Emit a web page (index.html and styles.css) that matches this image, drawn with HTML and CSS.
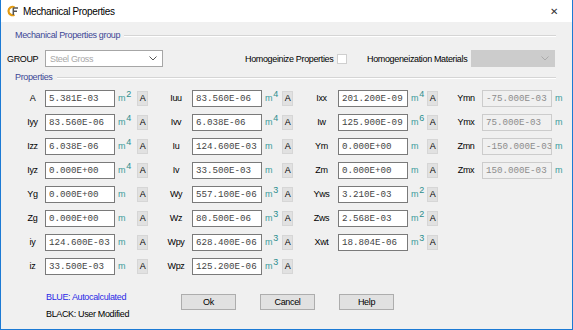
FILE: index.html
```html
<!DOCTYPE html>
<html lang="en">
<head>
    <meta charset="UTF-8">
    <title>Mechanical Properties</title>
    <link rel="stylesheet" href="styles.css">
</head>
<body>
    <div class="window">
        <div class="titlebar">
            <svg class="app-icon" width="12" height="12" viewBox="0 0 12 12">
                <path d="M7.5 2.2 A4.2 4.2 0 1 0 7.5 9.8" fill="none" stroke="#e39b12" stroke-width="2.2"/>
                <path d="M6.3 3 H11 M6.3 3 V10 M6.3 6.3 H10" fill="none" stroke="#555" stroke-width="1.5"/>
            </svg>
            <span class="title">Mechanical Properties</span>
            <span class="close">&#x2715;</span>
        </div>

        <div class="content">
            <div class="group-title"><span>Mechanical Properties group</span><i class="rule"></i></div>

            <div class="group-row">
                <span class="group-label">GROUP</span>
                <div class="combo">
                    <span>Steel Gross</span>
                    <svg width="8" height="5" viewBox="0 0 8 5"><path d="M0.5 0.5 L4 4 L7.5 0.5" fill="none" stroke="#555" stroke-width="1"/></svg>
                </div>
                <span class="homog">Homogeinize Properties</span>
                <span class="checkbox"></span>
                <span class="homog-mat">Homogeneization Materials</span>
                <div class="combo combo-off">
                    <svg width="8" height="5" viewBox="0 0 8 5"><path d="M0.5 0.5 L4 4 L7.5 0.5" fill="none" stroke="#aaa" stroke-width="1"/></svg>
                </div>
            </div>

            <div class="group-title props-title"><span>Properties</span><i class="rule"></i></div>

            <div class="props">
                <!-- row 1 -->
                <span class="lbl first">A</span><input class="val" value="5.381E-03"><span class="unit">m<sup>2</sup></span><span class="abtn">A</span>
                <span class="lbl">Iuu</span><input class="val" value="83.560E-06"><span class="unit">m<sup>4</sup></span><span class="abtn">A</span>
                <span class="lbl">Ixx</span><input class="val" value="201.200E-09"><span class="unit">m<sup>4</sup></span><span class="abtn">A</span>
                <span class="lbl">Ymn</span><input class="val off" value="-75.000E-03" disabled><span class="unit">m</span>
                <!-- row 2 -->
                <span class="lbl first">Iyy</span><input class="val" value="83.560E-06"><span class="unit">m<sup>4</sup></span><span class="abtn">A</span>
                <span class="lbl">Ivv</span><input class="val" value="6.038E-06"><span class="unit">m<sup>4</sup></span><span class="abtn">A</span>
                <span class="lbl">Iw</span><input class="val" value="125.900E-09"><span class="unit">m<sup>6</sup></span><span class="abtn">A</span>
                <span class="lbl">Ymx</span><input class="val off" value="75.000E-03" disabled><span class="unit">m</span>
                <!-- row 3 -->
                <span class="lbl first">Izz</span><input class="val" value="6.038E-06"><span class="unit">m<sup>4</sup></span><span class="abtn">A</span>
                <span class="lbl">Iu</span><input class="val" value="124.600E-03"><span class="unit">m</span><span class="abtn">A</span>
                <span class="lbl">Ym</span><input class="val" value="0.000E+00"><span class="unit">m</span><span class="abtn">A</span>
                <span class="lbl">Zmn</span><input class="val off" value="-150.000E-03" disabled><span class="unit">m</span>
                <!-- row 4 -->
                <span class="lbl first">Iyz</span><input class="val" value="0.000E+00"><span class="unit">m<sup>4</sup></span><span class="abtn">A</span>
                <span class="lbl">Iv</span><input class="val" value="33.500E-03"><span class="unit">m</span><span class="abtn">A</span>
                <span class="lbl">Zm</span><input class="val" value="0.000E+00"><span class="unit">m</span><span class="abtn">A</span>
                <span class="lbl">Zmx</span><input class="val off" value="150.000E-03" disabled><span class="unit">m</span>
                <!-- row 5 -->
                <span class="lbl first">Yg</span><input class="val" value="0.000E+00"><span class="unit">m</span><span class="abtn">A</span>
                <span class="lbl">Wy</span><input class="val" value="557.100E-06"><span class="unit">m<sup>3</sup></span><span class="abtn">A</span>
                <span class="lbl">Yws</span><input class="val" value="3.210E-03"><span class="unit">m<sup>2</sup></span><span class="abtn">A</span>
                <!-- row 6 -->
                <span class="lbl first">Zg</span><input class="val" value="0.000E+00"><span class="unit">m</span><span class="abtn">A</span>
                <span class="lbl">Wz</span><input class="val" value="80.500E-06"><span class="unit">m<sup>3</sup></span><span class="abtn">A</span>
                <span class="lbl">Zws</span><input class="val" value="2.568E-03"><span class="unit">m<sup>2</sup></span><span class="abtn">A</span>
                <!-- row 7 -->
                <span class="lbl first">iy</span><input class="val" value="124.600E-03"><span class="unit">m</span><span class="abtn">A</span>
                <span class="lbl">Wpy</span><input class="val" value="628.400E-06"><span class="unit">m<sup>3</sup></span><span class="abtn">A</span>
                <span class="lbl">Xwt</span><input class="val" value="18.804E-06"><span class="unit">m<sup>3</sup></span><span class="abtn">A</span>
                <!-- row 8 -->
                <span class="lbl first">iz</span><input class="val" value="33.500E-03"><span class="unit">m</span><span class="abtn">A</span>
                <span class="lbl">Wpz</span><input class="val" value="125.200E-06"><span class="unit">m<sup>3</sup></span><span class="abtn">A</span>
            </div>

            <div class="footer">
                <div class="legend">
                    <div class="blue">BLUE: Autocalculated</div>
                    <div>BLACK: User Modified</div>
                </div>
                <button class="btn">Ok</button>
                <button class="btn">Cancel</button>
                <button class="btn">Help</button>
            </div>
        </div>
    </div>
</body>
</html>
```

FILE: styles.css
```css
body {
    margin: 0;
    font-family: 'Liberation Sans', Arial, sans-serif;
    font-size: 9px;
    letter-spacing: -0.35px;
    color: #000;
    background: #fff;
}

.window {
    width: 573px;
    height: 330px;
    box-sizing: border-box;
    border: 1px solid #1c7ad4;
    border-top: none;
    background: #f0f0f0;
    overflow: hidden;
}

.titlebar {
    height: 22px;
    background: #fff;
    display: flex;
    align-items: center;
    padding-left: 6px;
}

.app-icon {
    margin-right: 4px;
}

.title {
    font-size: 10px;
    flex: 1;
}

.close {
    width: 20px;
    font-size: 10px;
    color: #333;
    margin-right: 2px;
}

.content {
    padding: 0 0 0 6px;
}

.group-title {
    display: flex;
    align-items: center;
    height: 12px;
    margin-top: 7px;
    padding-left: 8px;
    width: 541px;
    color: #3d4796;
}

.group-title .rule {
    flex: 1;
    height: 0;
    border-top: 1px solid #d5d5d5;
    border-bottom: 1px solid #fff;
    margin-left: 4px;
    margin-top: 1px;
}

.props-title {
    margin-top: 4px;
}

.group-row {
    display: flex;
    align-items: center;
    height: 17px;
    margin-top: 9px;
    white-space: nowrap;
}

.group-row > * {
    flex-shrink: 0;
}

.group-label {
    width: 38px;
}

.combo {
    width: 118px;
    height: 17px;
    box-sizing: border-box;
    border: 1px solid #a6a6a6;
    background: #fff;
    display: flex;
    align-items: center;
    justify-content: space-between;
    padding: 0 5px 0 4px;
    color: #a8a8a8;
}

.homog {
    width: 92px;
    margin-left: 82px;
}

.checkbox {
    width: 10px;
    height: 10px;
    box-sizing: border-box;
    border: 1px solid #cfcfcf;
    background: #fff;
}

.homog-mat {
    width: 104px;
    margin-left: 20px;
}

.combo-off {
    width: 84px;
    background: #cccccc;
    border-color: #cccccc;
    justify-content: flex-end;
}

.props {
    display: grid;
    grid-template-columns: 37px 70px 22px 11px 44px 70px 20px 11px 45px 70px 19px 11px 44px 70px 12px;
    grid-auto-rows: 24px;
    align-items: center;
    margin-top: 3px;
    margin-left: 1px;
}

.lbl {
    padding-left: 12px;
    text-align: center;
}

.lbl.first {
    grid-column: 1;
}

.val {
    width: 70px;
    height: 17px;
    box-sizing: border-box;
    border: 1px solid #7a7a7a;
    background: #fff;
    font-family: 'Liberation Mono', 'Courier New', monospace;
    font-size: 9.2px;
    letter-spacing: 0;
    color: #444;
    padding: 0 0 0 3px;
    margin: 0;
    outline: none;
}

.val.off {
    background: #f0f0f0;
    border-color: #cccccc;
    color: #8c8c8c;
}

.unit {
    padding-left: 3px;
    color: #3a9b9b;
    font-size: 9px;
}

.unit sup {
    font-size: 9px;
    vertical-align: 4px;
    line-height: 0;
    margin-left: 1px;
    color: #2b8e8e;
}

.abtn {
    width: 11px;
    height: 15px;
    box-sizing: border-box;
    background: #e1e1e1;
    border: 1px solid #d6d6d6;
    font-size: 9px;
    display: flex;
    align-items: center;
    justify-content: center;
}

.footer {
    display: flex;
    align-items: flex-start;
    margin-top: 11px;
}

.legend {
    margin-left: 39px;
    width: 135px;
    line-height: 17px;
}

.legend .blue {
    color: #2a2ae6;
}

.btn {
    width: 55px;
    height: 16px;
    margin: 5px 24px 0 0;
    padding: 0;
    background: #e1e1e1;
    border: 1px solid #adadad;
    font-family: 'Liberation Sans', Arial, sans-serif;
    font-size: 9px;
    letter-spacing: -0.35px;
    color: #000;
}
```
